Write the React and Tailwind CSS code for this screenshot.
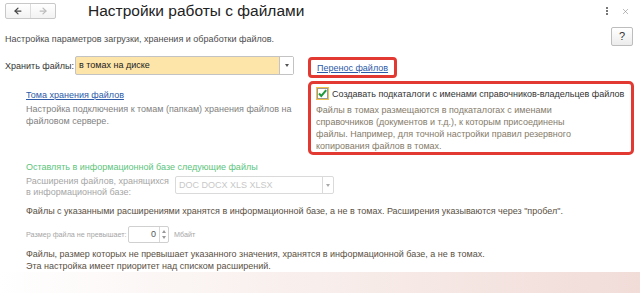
import { ArrowLeft, ArrowRight, X } from 'lucide-react';

const font = { fontFamily: '"Liberation Sans", Arial, sans-serif' };

const Caret = ({ className = 'border-t-[#555]' }) => (
    <span className={`block w-0 h-0 border-l-[2.5px] border-r-[2.5px] border-t-[3px] border-l-transparent border-r-transparent ${className}`} />
);

const App = () => {
    return (
        <div
            className="relative w-[640px] h-[293px] overflow-hidden bg-white text-[9px] leading-[12px] text-[#333] whitespace-nowrap"
            style={font}
        >
            {/* Шапка */}
            <div className="flex items-center h-[22px] pl-[5px] pr-[10px]">
                <div className="flex h-[16px] w-[51px] border border-[#c8c8c8] rounded-[2px] bg-gradient-to-b from-white to-[#f2f2f2]">
                    <div className="flex-1 flex items-center justify-center border-r border-[#dcdcdc]">
                        <ArrowLeft size={10} strokeWidth={3} className="text-[#444]" />
                    </div>
                    <div className="flex-1 flex items-center justify-center">
                        <ArrowRight size={10} strokeWidth={3} className="text-[#bbb]" />
                    </div>
                </div>
                <h1 className="ml-[32px] text-[15.5px] leading-[20px] text-[#222]">Настройки работы с файлами</h1>
                <div className="ml-auto flex items-center gap-[13px] text-[#888]">
                    <div className="flex flex-col gap-[1px]">
                        <span className="block w-[2px] h-[2px] bg-[#777]" />
                        <span className="block w-[2px] h-[2px] bg-[#777]" />
                        <span className="block w-[2px] h-[2px] bg-[#777]" />
                    </div>
                    <X size={9} strokeWidth={1.5} />
                </div>
            </div>

            {/* Пояснение */}
            <div className="flex items-center h-[28px] pl-[5px] pr-[7px]">
                <p className="mt-[5px] text-[#4d4d4d]">Настройка параметров загрузки, хранения и обработки файлов.</p>
                <button className="ml-auto w-[22px] h-[19px] border border-[#bdbdbd] rounded-[2px] bg-gradient-to-b from-white to-[#ececec] text-[11px] text-[#333]">
                    ?
                </button>
            </div>

            {/* Хранение */}
            <div className="grid grid-cols-[303px_326px] mt-[6px] pl-[5px]">
                <div>
                    <div className="flex items-center h-[19px]">
                        <span className="w-[70px]">Хранить файлы:</span>
                        <div className="flex h-[19px] w-[219px] border border-[#c3c3c3] rounded-[2px] bg-[#fde4a8]">
                            <span className="flex-1 pl-[3px] leading-[17px] text-[#222]">в томах на диске</span>
                            <span className="flex items-center justify-center w-[14px] border-l border-[#c3c3c3] bg-white">
                                <Caret />
                            </span>
                        </div>
                    </div>
                    <div className="pl-[21px] mt-[14px]">
                        <a className="text-[#2c5aa8] underline">Тома хранения файлов</a>
                        <p className="mt-[2px] text-[#7f7f7f]">
                            Настройка подключения к томам (папкам) хранения файлов на
                            <br />
                            файловом сервере.
                        </p>
                    </div>
                </div>
                <div>
                    <div className="flex items-center w-[89px] h-[21px] mt-[1px] border-[3px] border-[#e23a33] rounded-[4px] pl-[6px]">
                        <a className="text-[#2c5aa8] underline">Перенос файлов</a>
                    </div>
                    <div className="mt-[3px] h-[74px] border-[3px] border-[#e23a33] rounded-[5px] pl-[5px] pt-[3px]">
                        <div className="flex items-center gap-[3px] h-[13px]">
                            <span className="flex items-center justify-center w-[13px] h-[13px] border border-[#f0c24a] bg-white">
                                <svg width="11" height="11" viewBox="0 0 11 11">
                                    <rect x="0.5" y="0.5" width="10" height="10" fill="white" stroke="#9a9a9a" />
                                    <path d="M2 5.5 L4.3 8 L9.2 2.2" fill="none" stroke="#1f9a3a" strokeWidth="2" />
                                </svg>
                            </span>
                            <span className="text-[#333]">Создавать подкаталоги с именами справочников-владельцев файлов</span>
                        </div>
                        <p className="mt-[4px] text-[#857b6a]">
                            Файлы в томах размещаются в подкаталогах с именами
                            <br />
                            справочников (документов и т.д.), к которым присоединены
                            <br />
                            файлы. Например, для точной настройки правил резервного
                            <br />
                            копирования файлов в томах.
                        </p>
                    </div>
                </div>
            </div>

            {/* Хранение в информационной базе */}
            <div className="pl-[26px] mt-[6px]">
                <p className="text-[#5cc47c]">Оставлять в информационной базе следующие файлы</p>
                <div className="flex items-start mt-[3px]">
                    <p className="w-[149px] text-[#a6a6a6] leading-[11px]">
                        Расширения файлов, хранящихся
                        <br />
                        в информационной базе:
                    </p>
                    <div className="flex h-[18px] w-[159px] border border-[#dadada] rounded-[2px]">
                        <span className="flex-1 pl-[3px] leading-[16px] text-[#c8c8c8]">DOC DOCX XLS XLSX</span>
                        <span className="flex items-center justify-center w-[11px] border-l border-[#dadada]">
                            <Caret className="border-t-[#aaa]" />
                        </span>
                    </div>
                </div>
                <p className="mt-[7px] text-[#5a5043]">
                    Файлы с указанными расширениями хранятся в информационной базе, а не в томах. Расширения указываются через "пробел".
                </p>
                <div className="flex items-center mt-[9px] text-[7.2px]">
                    <span className="w-[102px] text-[#a6a6a6]">Размер файла не превышает:</span>
                    <div className="flex h-[17px] w-[41px] border border-[#d0d0d0] rounded-[2px] text-[9px]">
                        <span className="flex-1 pr-[3px] text-right leading-[15px] text-[#555]">0</span>
                        <span className="flex flex-col items-center justify-center gap-[3px] w-[9px] border-l border-[#d8d8d8]">
                            <Caret className="border-t-[#999] rotate-180" />
                            <Caret className="border-t-[#999]" />
                        </span>
                    </div>
                    <span className="ml-[5px] text-[#a6a6a6]">Мбайт</span>
                </div>
                <p className="mt-[5px] text-[#5a5043]">
                    Файлы, размер которых не превышает указанного значения, хранятся в информационной базе, а не в томах.
                    <br />
                    Эта настройка имеет приоритет над списком расширений.
                </p>
            </div>

            {/* Фон внизу */}
            <div className="absolute left-0 right-0 bottom-0 h-[21px] bg-gradient-to-r from-white via-[#f8eeeb] to-[#f1dcd8]" />
        </div>
    );
};

export default App;
